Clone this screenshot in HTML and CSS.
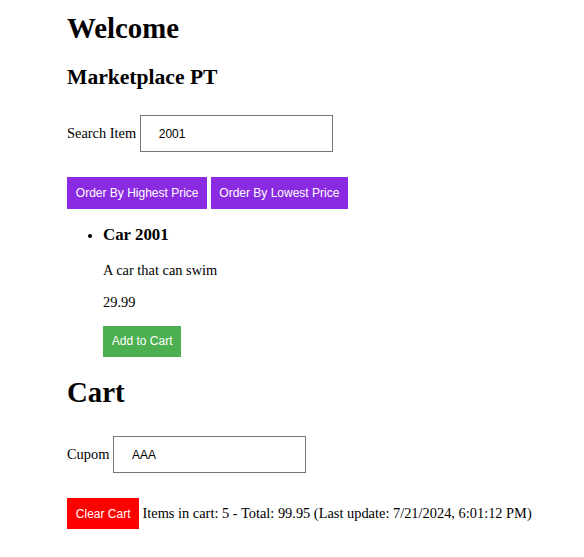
FILE: index.html
```html
<!DOCTYPE html>
<html>
<head>
<meta charset="utf-8">
<link rel="stylesheet" href="styles.css">
</head>
<body>
<div class="app">
  <h1 class="title">Welcome</h1>
  <h2 class="subtitle">Marketplace PT</h2>
  <div class="field">
    <label>Search Item</label>
    <input class="text-input" type="text" value="2001">
  </div>
  <div class="sorters">
    <button class="btn btn-purple">Order By Highest Price</button>
    <button class="btn btn-purple">Order By Lowest Price</button>
  </div>
  <ul class="products">
    <li>
      <h3 class="product-name">Car 2001</h3>
      <p class="product-text">A car that can swim</p>
      <p class="product-text price">29.99</p>
      <button class="btn btn-green">Add to Cart</button>
    </li>
  </ul>
  <h1 class="title cart-title">Cart</h1>
  <div class="field cupom-field">
    <label>Cupom</label>
    <input class="text-input" type="text" value="AAA">
  </div>
  <div class="cart-row">
    <button class="btn btn-red">Clear Cart</button>
    <span class="cart-summary">Items in cart: 5 - Total: 99.95 (Last update: 7/21/2024, 6:01:12 PM)</span>
  </div>
</div>
</body>
</html>
```

FILE: styles.css
```css
body {
  margin: 0;
  font-family: "Liberation Serif", "Times New Roman", serif;
  font-size: 14.4px;
  color: #000;
  background: #fff;
}
.app {
  padding: 12px 0 0 67px;
}
.title {
  font-size: 28.8px;
  font-weight: bold;
  margin: 0 0 20.3px;
}
.subtitle {
  font-size: 21.6px;
  font-weight: bold;
  margin: 0;
}
.field {
  margin-top: 24.8px;
}
.text-input {
  box-sizing: border-box;
  font-family: "Liberation Sans", Arial, sans-serif;
  font-size: 12px;
  color: #000;
  height: 37px;
  width: 193px;
  padding: 0 18px;
  border: 1px solid #767676;
  margin: 0;
}
.sorters {
  margin-top: 25px;
}
.btn {
  font-family: "Liberation Sans", Arial, sans-serif;
  font-size: 12px;
  color: #fff;
  border: none;
  margin: 0;
  padding: 0 8.4px 0 8.8px;
  height: 32px;
  cursor: pointer;
}
.btn-purple { background: #8a2be2; }
.btn-green { background: #4caf50; height: 31px; }
.btn-red { background: #ff0000; height: 31px; }
.products {
  margin: 0;
  padding-left: 36px;
}
.product-name {
  font-size: 16.85px;
  margin: 15.85px 0 16.85px;
}
.product-text {
  margin: 14.4px 0;
}
.price {
  margin-top: 15.4px;
  margin-bottom: 14.4px;
}
.cart-title {
  margin-top: 19.3px;
  margin-bottom: 0;
}
.cupom-field {
  margin-top: 27.6px;
}
.cart-row {
  margin-top: 25px;
}
```
